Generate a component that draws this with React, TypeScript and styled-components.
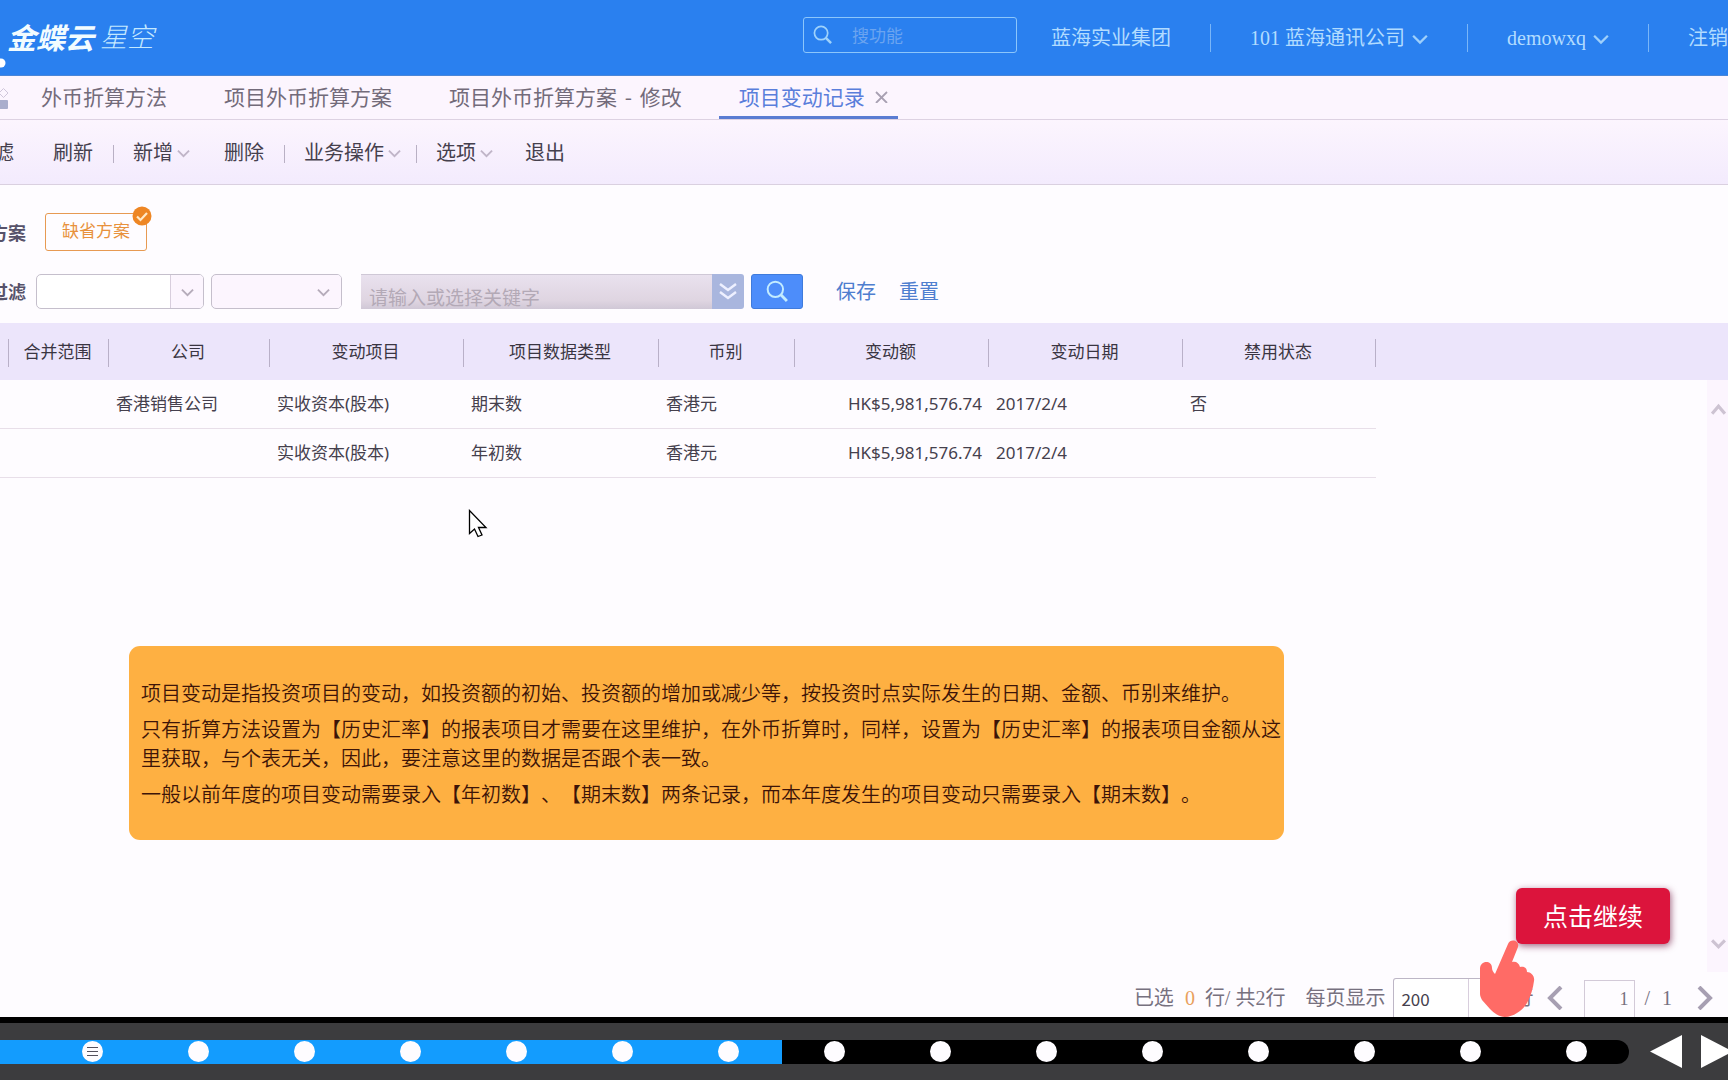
import React from "react";
import styled, { createGlobalStyle } from "styled-components";

const sans = `"Noto Sans CJK SC", sans-serif`;
const mixed = `"Liberation Serif", "Noto Sans CJK SC", serif`;

const GlobalStyle = createGlobalStyle`
  * { box-sizing: border-box; }
  body { margin: 0; font-family: ${sans}; color: #45404d; background: #fefcff; }
  button, input, select { font: inherit; color: inherit; margin: 0; }
  button { border: 0; padding: 0; background: none; cursor: pointer; white-space: nowrap; }
`;

const Page = styled.div`
  position: relative;
  display: flex;
  flex-direction: column;
  height: 100vh;
  overflow: hidden;
`;

/* header */
const Header = styled.header`
  display: flex;
  align-items: center;
  height: 76px;
  flex: none;
  background: #2a80ef;
  border-bottom: 1px solid #4a86d8;
  color: #b2dcff;
`;
const LogoMark = styled.svg`
  flex: none;
  width: 7px;
  height: 76px;
`;
const Logo = styled.div`
  display: flex;
  align-items: center;
  gap: 6px;
  padding-bottom: 4px;
  font-size: 29px;
  line-height: 40px;
  font-style: italic;
  font-weight: 700;
  color: #f2fcff;
  white-space: nowrap;
`;
const LogoLight = styled.span`
  font-size: 27px;
  font-weight: 300;
  color: #c4e9ff;
`;
const HeaderSearch = styled.label`
  display: flex;
  align-items: center;
  width: 214px;
  height: 36px;
  margin: 0 34px 6px auto;
  padding-left: 9px;
  gap: 20px;
  border: 1px solid #8cc6fb;
  border-radius: 3px;
`;
const HeaderInput = styled.input`
  flex: 1;
  min-width: 0;
  padding: 0;
  border: 0;
  outline: 0;
  background: none;
  font-size: 17px;
  line-height: 24px;
  &::placeholder { color: #6ba4f0; opacity: 1; }
`;
const HeaderNav = styled.nav`
  display: flex;
  align-items: center;
  font-family: ${mixed};
  font-size: 20px;
  line-height: 28px;
`;
const HeaderItem = styled.button`
  display: flex;
  align-items: center;
  gap: 7px;
`;
const HeaderRule = styled.span`
  width: 1px;
  height: 28px;
  margin: 0 39px;
  background: #7ab6f8;
`;

/* tabs */
const Tabs = styled.nav`
  display: flex;
  height: 44px;
  flex: none;
  background: #fcf5fe;
  border-bottom: 1px solid #ddd2e2;
`;
const TilesIcon = styled.svg`
  flex: none;
  width: 22px;
  height: 22px;
  margin: 12px 13px 0 -14px;
`;
const Tab = styled.button<{ $active?: boolean }>`
  display: flex;
  align-items: center;
  height: 43px;
  margin-right: ${(p) => (p.$active ? 0 : 17)}px;
  padding: 0 ${(p) => (p.$active ? 10 : 20)}px 0 20px;
  gap: 10px;
  font-size: 21px;
  border-bottom: 3px solid ${(p) => (p.$active ? "#5a7cd2" : "transparent")};
  color: ${(p) => (p.$active ? "#5a7edb" : "#736b7a")};
`;
const Dash = styled.span`
  margin: 0 3px;
`;

/* toolbar */
const Toolbar = styled.div`
  display: flex;
  align-items: center;
  height: 65px;
  flex: none;
  margin-left: -26px;
  background: linear-gradient(#fcf5fe, #f3ebfd);
  border-bottom: 1px solid #dad0e0;
  font-size: 20px;
  line-height: 28px;
`;
const Tool = styled.button<{ $gap?: number }>`
  display: flex;
  align-items: center;
  gap: 4px;
  margin-left: ${(p) => p.$gap ?? 0}px;
`;
const ToolRule = styled.span<{ $tight?: boolean }>`
  width: 1px;
  height: 18px;
  margin: 3px 19px 0 ${(p) => (p.$tight ? 15 : 20)}px;
  background: #b9b0c4;
`;

/* filters */
const Filters = styled.section`
  flex: none;
  padding: 27px 0 12px;
`;
const FilterRow = styled.div<{ $top?: number }>`
  display: flex;
  align-items: center;
  height: 40px;
  margin-left: -10px;
  margin-top: ${(p) => p.$top ?? 0}px;
`;
const RowLabel = styled.label`
  width: 36px;
  font-size: 18px;
  line-height: 26px;
  font-weight: 700;
  color: #57526a;
  white-space: nowrap;
`;
const Scheme = styled.button`
  position: relative;
  height: 38px;
  margin-left: 19px;
  padding: 0 16px 6px;
  border: 1px solid #e79a52;
  border-radius: 3px;
  font-size: 17px;
  color: #e8913c;
`;
const SchemeTick = styled.svg`
  position: absolute;
  top: -8px;
  right: -6px;
  width: 20px;
  height: 20px;
`;
const Picker = styled.div<{ $w: number; $left: number; $fill: string }>`
  display: flex;
  align-items: center;
  width: ${(p) => p.$w}px;
  height: 35px;
  margin-left: ${(p) => p.$left}px;
  border: 1px solid #c5bfcc;
  border-radius: 5px;
  background: ${(p) => p.$fill};
  overflow: hidden;
`;
const PickerSelect = styled.select`
  flex: 1;
  min-width: 0;
  height: 33px;
  border: 0;
  outline: 0;
  appearance: none;
  background: none;
`;
const PickerArrow = styled.span<{ $line?: boolean }>`
  display: flex;
  align-items: center;
  justify-content: center;
  width: ${(p) => (p.$line ? 33 : 36)}px;
  height: 33px;
  border-left: ${(p) => (p.$line ? "1px solid #d8cedd" : "0")};
  background: #fcf5fe;
`;
const Keyword = styled.div`
  display: flex;
  width: 383px;
  height: 35px;
  margin-left: 19px;
  border-radius: 0 3px 3px 0;
  overflow: hidden;
`;
const KeywordInput = styled.input`
  flex: 1;
  min-width: 0;
  padding: 10px 8px 0;
  border: 0;
  outline: 0;
  border-top: 1px solid #cfc8d6;
  background: linear-gradient(#e9e1ee, #dfd5e1 75%, #d0c8d6);
  font-size: 19px;
  line-height: 24px;
  &::placeholder { color: #b3a9b6; opacity: 1; }
`;
const KeywordMore = styled.button`
  display: flex;
  align-items: center;
  justify-content: center;
  width: 32px;
  background: #a9b6de;
`;
const SearchButton = styled.button`
  display: flex;
  align-items: center;
  justify-content: center;
  width: 52px;
  height: 35px;
  margin-left: 7px;
  border: 1px solid #3f7bdc;
  border-radius: 3px;
  background: #4d8dfa;
`;
const TextLink = styled.a<{ $gap: number }>`
  margin-left: ${(p) => p.$gap}px;
  font-size: 20px;
  line-height: 28px;
  color: #4f7ecf;
  text-decoration: none;
`;

/* grid */
const GridArea = styled.section`
  position: relative;
  flex: 1;
  min-height: 0;
`;
const Grid = styled.table`
  width: 100%;
  table-layout: fixed;
  border-collapse: separate;
  border-spacing: 0;
  font-family: "Noto Sans", ${sans};
  font-size: 17px;
  line-height: 24px;
`;
const HeadCell = styled.th`
  height: 57px;
  padding: 2px 0 0;
  background: #ece5fb;
  font-weight: 400;
  color: #3a3542;
`;
const HeadText = styled.div<{ $open?: boolean }>`
  height: 28px;
  padding-right: 2px;
  line-height: 26px;
  border-right: ${(p) => (p.$open ? "0" : "1px solid #b9b0c8")};
  white-space: nowrap;
`;
const Cell = styled.td<{ $right?: boolean; $open?: boolean }>`
  height: 49px;
  padding: 0 7px;
  border-bottom: ${(p) => (p.$open ? "0" : "1px solid #e8dfe9")};
  text-align: ${(p) => (p.$right ? "right" : "left")};
  white-space: nowrap;
`;
const Rail = styled.div`
  position: absolute;
  top: 57px;
  right: 0;
  bottom: 0;
  display: flex;
  flex-direction: column;
  justify-content: space-between;
  align-items: flex-end;
  width: 21px;
  padding: 22px 2px;
  background: #fcf5fe;
`;

/* pager */
const Pager = styled.footer`
  display: flex;
  align-items: center;
  justify-content: flex-end;
  height: 45px;
  flex: none;
  padding: 7px 15px 0 0;
  font-family: ${mixed};
  font-size: 20px;
  line-height: 28px;
  color: #77717f;
  overflow: hidden;
  white-space: nowrap;
`;
const PagerText = styled.span<{ $gap?: number }>`
  margin-left: ${(p) => p.$gap ?? 0}px;
`;
const Count = styled.span`
  margin: 0 10px 0 11px;
  color: #e9a05c;
`;
const SizeBox = styled.div`
  display: flex;
  width: 112px;
  height: 40px;
  margin: 0 8px;
  border: 1px solid #bdb6c6;
  border-bottom: 0;
  border-radius: 3px 0 0 0;
  background: #fff;
`;
const SizeSelect = styled.select`
  width: 75px;
  padding: 0 7px;
  border: 0;
  border-right: 1px solid #d8cedd;
  outline: 0;
  appearance: none;
  background: none;
  font-family: ${sans};
  font-size: 17px;
  color: #45404d;
`;
const PageInput = styled.input`
  width: 51px;
  height: 38px;
  margin: 2px 9px 0 21px;
  padding: 0 6px;
  border: 1px solid #d3cad8;
  border-bottom: 0;
  outline: 0;
  background: none;
  text-align: right;
  font-size: 18px;
`;
const PageButton = styled.button<{ $gap: number }>`
  display: flex;
  margin-left: ${(p) => p.$gap}px;
`;

/* player bar */
const Player = styled.div`
  display: flex;
  align-items: center;
  height: 63px;
  flex: none;
  border-top: 6px solid #000;
  background: #3c3c3e;
`;
const Track = styled.div`
  display: flex;
  align-items: center;
  justify-content: space-between;
  flex: 1;
  height: 24px;
  padding: 0 42px 0 82px;
  border-radius: 0 12px 12px 0;
  background: linear-gradient(to right, #139cfe 48%, #000 48%);
`;
const Dot = styled.button`
  display: flex;
  align-items: center;
  justify-content: center;
  width: 21px;
  height: 21px;
  margin-bottom: 1px;
  border-radius: 50%;
  background: #fefcff;
`;
const PlayerNav = styled.div`
  display: flex;
  gap: 19px;
  width: 99px;
  padding-left: 21px;
  overflow: hidden;
`;
const PlayerButton = styled.button`
  display: flex;
  flex: none;
`;

/* guide layer */
const Note = styled.aside`
  position: absolute;
  left: 129px;
  top: 646px;
  width: 1155px;
  padding: 32px 3px 32px 12px;
  border-radius: 11px;
  background: #feb042;
  color: #3d1408;
  font-size: 20px;
  line-height: 29px;
  font-weight: 350;
  text-spacing-trim: space-all;
`;
const NoteText = styled.p`
  margin: 0 0 7px;
  &:last-child { margin: 0; }
`;
const Continue = styled.button`
  position: absolute;
  right: 58px;
  bottom: 136px;
  width: 154px;
  height: 56px;
  padding-bottom: 2px;
  border-radius: 6px;
  background: #dc143c;
  box-shadow: 1px 2px 7px rgba(110, 20, 60, 0.65);
  font-size: 25px;
  line-height: 36px;
  color: #fff;
`;
const Hand = styled.svg`
  position: absolute;
  right: 192px;
  bottom: 62px;
  width: 58px;
  height: 79px;
`;
const Pointer = styled.svg`
  position: absolute;
  left: 468px;
  top: 509px;
  width: 20px;
  height: 30px;
`;

function Chevron({ size = 13, color = "#c0b5c8", weight = 2, up = false }) {
  return (
    <svg width={size} height={size} viewBox="0 0 14 14" fill="none" stroke={color} strokeWidth={weight} aria-hidden="true">
      <path d={up ? "M1 11 7 4l6 7" : "M1 5l6 6 6-6"} />
    </svg>
  );
}

function Lens({ size, color }: { size: number; color: string }) {
  return (
    <svg width={size} height={size} viewBox="0 0 20 20" fill="none" stroke={color} aria-hidden="true">
      <circle cx="8.5" cy="8.5" r="7" strokeWidth="1.8" />
      <path d="M13.5 13.5 19 19" strokeWidth="2.6" />
    </svg>
  );
}

const columns = [
  { title: "", width: 9 },
  { title: "合并范围", width: 100 },
  { title: "公司", width: 161 },
  { title: "变动项目", width: 194 },
  { title: "项目数据类型", width: 195 },
  { title: "币别", width: 136 },
  { title: "变动额", width: 194 },
  { title: "变动日期", width: 194 },
  { title: "禁用状态", width: 193 },
];

const rows = [
  ["", "", "香港销售公司", "实收资本(股本)", "期末数", "香港元", "HK$5,981,576.74", "2017/2/4", "否"],
  ["", "", "", "实收资本(股本)", "年初数", "香港元", "HK$5,981,576.74", "2017/2/4", ""],
];

const notes = [
  "项目变动是指投资项目的变动，如投资额的初始、投资额的增加或减少等，按投资时点实际发生的日期、金额、币别来维护。",
  "只有折算方法设置为【历史汇率】的报表项目才需要在这里维护，在外币折算时，同样，设置为【历史汇率】的报表项目金额从这里获取，与个表无关，因此，要注意这里的数据是否跟个表一致。",
  "一般以前年度的项目变动需要录入【年初数】、【期末数】两条记录，而本年度发生的项目变动只需要录入【期末数】。",
];

export default function App() {
  return (
    <Page>
      <GlobalStyle />
      <Header>
        <LogoMark viewBox="0 0 7 76" aria-hidden="true">
          <circle cx="1" cy="63" r="4.5" fill="#fff" />
        </LogoMark>
        <Logo>
          金蝶云<LogoLight>星空</LogoLight>
        </Logo>
        <HeaderSearch>
          <Lens size={19} color="#9fd2fb" />
          <HeaderInput placeholder="搜功能" aria-label="搜功能" />
        </HeaderSearch>
        <HeaderNav>
          <HeaderItem>蓝海实业集团</HeaderItem>
          <HeaderRule />
          <HeaderItem>
            101 蓝海通讯公司 <Chevron size={16} color="#9fd0fb" />
          </HeaderItem>
          <HeaderRule />
          <HeaderItem>
            demowxq <Chevron size={16} color="#9fd0fb" />
          </HeaderItem>
          <HeaderRule />
          <HeaderItem>注销</HeaderItem>
        </HeaderNav>
      </Header>

      <Tabs>
        <TilesIcon viewBox="0 0 22 22" aria-hidden="true">
          <rect x="1" y="1" width="8" height="8" rx="1" fill="#a9adcc" />
          <rect x="1" y="12" width="8" height="9" rx="1" fill="#a9adcc" />
          <path d="M17.5 0.500 22 5l-4.500 4.500L13 5z" fill="none" stroke="#cfc6da" />
          <rect x="13" y="12" width="9" height="9" rx="1" fill="#a9adcc" />
        </TilesIcon>
        <Tab>外币折算方法</Tab>
        <Tab>项目外币折算方案</Tab>
        <Tab>
          <span>
            项目外币折算方案<Dash> - </Dash>修改
          </span>
        </Tab>
        <Tab $active>
          项目变动记录
          <svg width="13" height="13" viewBox="0 0 13 13" stroke="#a8a0b2" strokeWidth="1.800" aria-hidden="true">
            <path d="M1 2l11 11M12 2 1 13" />
          </svg>
        </Tab>
      </Tabs>

      <Toolbar>
        <Tool>过滤</Tool>
        <Tool $gap={39}>刷新</Tool>
        <ToolRule />
        <Tool>
          新增 <Chevron />
        </Tool>
        <Tool $gap={34}>删除</Tool>
        <ToolRule />
        <Tool>
          业务操作 <Chevron />
        </Tool>
        <ToolRule $tight />
        <Tool>
          选项 <Chevron />
        </Tool>
        <Tool $gap={32}>退出</Tool>
      </Toolbar>

      <Filters>
        <FilterRow>
          <RowLabel as="span">方案</RowLabel>
          <Scheme>
            缺省方案
            <SchemeTick viewBox="0 0 20 20" aria-hidden="true">
              <circle cx="10" cy="10" r="9.500" fill="#ee8624" />
              <path d="M5 10.500l3.500 3.500L15 7" fill="none" stroke="#ffe9c8" strokeWidth="2.200" />
            </SchemeTick>
          </Scheme>
        </FilterRow>
        <FilterRow $top={19}>
          <RowLabel htmlFor="filter-field">过滤</RowLabel>
          <Picker $w={168} $left={10} $fill="#fff">
            <PickerSelect id="filter-field" />
            <PickerArrow $line>
              <Chevron color="#b5abba" />
            </PickerArrow>
          </Picker>
          <Picker $w={131} $left={7} $fill="#fcf5fe">
            <PickerSelect aria-label="条件" />
            <PickerArrow>
              <Chevron color="#b5abba" />
            </PickerArrow>
          </Picker>
          <Keyword>
            <KeywordInput placeholder="请输入或选择关键字" aria-label="关键字" />
            <KeywordMore aria-label="更多">
              <svg width="18" height="20" viewBox="0 0 18 20" fill="none" stroke="#eef0ff" strokeWidth="2.400" aria-hidden="true">
                <path d="M1 3l8 6 8-6M1 11l8 6 8-6" />
              </svg>
            </KeywordMore>
          </Keyword>
          <SearchButton aria-label="搜索">
            <Lens size={22} color="#c3ecff" />
          </SearchButton>
          <TextLink href="#save" $gap={33}>保存</TextLink>
          <TextLink href="#reset" $gap={23}>重置</TextLink>
        </FilterRow>
      </Filters>

      <GridArea>
        <Grid>
          <colgroup>
            {columns.map((c, i) => (
              <col key={i} width={c.width} />
            ))}
            <col />
          </colgroup>
          <thead>
            <tr>
              {columns.map((c, i) => (
                <HeadCell key={i}>
                  <HeadText>{c.title}</HeadText>
                </HeadCell>
              ))}
              <HeadCell>
                <HeadText $open />
              </HeadCell>
            </tr>
          </thead>
          <tbody>
            {rows.map((row, r) => (
              <tr key={r}>
                {row.map((value, i) => (
                  <Cell key={i} $right={i === 6}>
                    {value}
                  </Cell>
                ))}
                <Cell $open />
              </tr>
            ))}
          </tbody>
        </Grid>
        <Rail>
          <Chevron size={15} color="#cdc3d2" weight={3} up />
          <Chevron size={15} color="#cdc3d2" weight={3} />
        </Rail>
      </GridArea>

      <Pager>
        <PagerText>已选</PagerText>
        <Count>0</Count>
        <PagerText>行/ 共2行</PagerText>
        <PagerText $gap={20}>每页显示</PagerText>
        <SizeBox>
          <SizeSelect aria-label="每页显示">
            <option>200</option>
          </SizeSelect>
        </SizeBox>
        <PagerText>行</PagerText>
        <PageButton $gap={14} aria-label="上一页">
          <svg width="16" height="24" viewBox="0 0 16 24" fill="none" stroke="#a79fb2" strokeWidth="4" aria-hidden="true">
            <path d="M14 1 3 12l11 11" />
          </svg>
        </PageButton>
        <PageInput aria-label="页码" defaultValue="1" />
        <PagerText>/</PagerText>
        <PagerText $gap={12}>1</PagerText>
        <PageButton $gap={25} aria-label="下一页">
          <svg width="16" height="24" viewBox="0 0 16 24" fill="none" stroke="#a79fb2" strokeWidth="4" aria-hidden="true">
            <path d="M2 1l11 11L2 23" />
          </svg>
        </PageButton>
      </Pager>

      <Player>
        <Track>
          {Array.from({ length: 15 }, (_, i) => (
            <Dot key={i} aria-label={`第${i + 1}步`}>
              {i === 0 && (
                <svg width="11" height="11" viewBox="0 0 11 11" stroke="#55505c" aria-hidden="true">
                  <path d="M0 1.500h11M0 5.500h11M0 9.500h11" />
                </svg>
              )}
            </Dot>
          ))}
        </Track>
        <PlayerNav>
          <PlayerButton aria-label="后退">
            <svg width="32" height="33" viewBox="0 0 32 33" fill="#fff" aria-hidden="true">
              <path d="M32 0v33L0 16.500z" />
            </svg>
          </PlayerButton>
          <PlayerButton aria-label="前进">
            <svg width="32" height="33" viewBox="0 0 32 33" fill="#fff" aria-hidden="true">
              <path d="M0 0v33l32-16.500z" />
            </svg>
          </PlayerButton>
        </PlayerNav>
      </Player>

      <Note>
        {notes.map((text) => (
          <NoteText key={text}>{text}</NoteText>
        ))}
      </Note>
      <Continue>点击继续</Continue>
      <Hand viewBox="0 0 58 79" aria-hidden="true">
        <path
          d="M30 5c2-6 12-4 10 3L34 23c4-1 7 1 8 5 4-1 7 1 7 5 4 0 8 4 7 9-1 7-3 15-7 22-4 7-13 14-22 14-6 0-11-4-15-8L4 61c-1-2-2-4-2-6V30c0-9 12-9 12-1 0 2 1 4 3 6z"
          fill="#ff6b66"
        />
      </Hand>
      <Pointer viewBox="0 0 20 30" aria-hidden="true">
        <path d="M1.500 1.500v23l5-4.500 3.500 7.500 4-1.500-3.500-7.500h7.500z" fill="#fff" stroke="#000" strokeWidth="1.300" />
      </Pointer>
    </Page>
  );
}
